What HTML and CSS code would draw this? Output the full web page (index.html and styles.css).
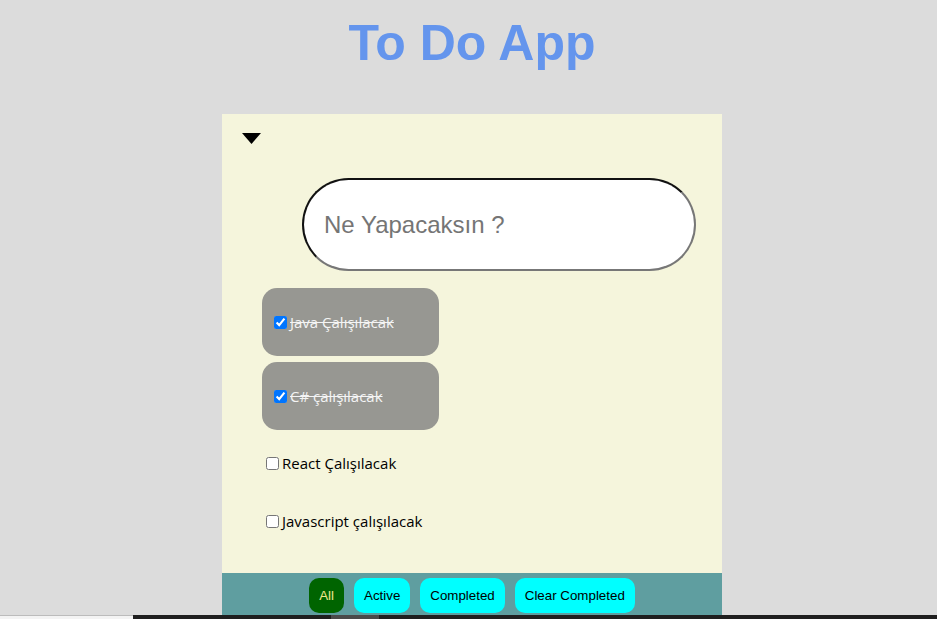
FILE: index.html
```html
<!DOCTYPE html>
<html lang="tr">
<head>
<meta charset="utf-8">
<title>To Do App</title>
<link rel="stylesheet" href="styles.css">
</head>
<body>
<h1 class="title">To Do App</h1>
<section class="card">
  <header class="card-head">
    <label class="toggle-all" aria-label="Toggle all">
      <svg width="19" height="11" viewBox="0 0 19 11"><polygon points="0,0 19,0 9.5,11" fill="#000"/></svg>
    </label>
    <input class="new-todo" type="text" placeholder="Ne Yapacaksın ?">
  </header>
  <ul class="todo-list">
    <li class="todo done"><input type="checkbox" checked><span class="todo-text">Java Çalışılacak</span></li>
    <li class="todo done"><input type="checkbox" checked><span class="todo-text">C# çalışılacak</span></li>
    <li class="todo"><input type="checkbox"><span class="todo-text">React Çalışılacak</span></li>
    <li class="todo"><input type="checkbox"><span class="todo-text">Javascript çalışılacak</span></li>
  </ul>
  <footer class="card-foot">
    <button class="filter filter-on">All</button>
    <button class="filter">Active</button>
    <button class="filter">Completed</button>
    <button class="filter">Clear Completed</button>
  </footer>
</section>
<div class="taskbar">
  <div class="taskbar-left"></div>
  <div class="taskbar-right"><span class="taskbar-item"></span></div>
</div>
</body>
</html>
```
FILE: styles.css
```css
html, body {
  background: #dcdcdc;
}
body {
  margin: 0;
  padding: 0 0 0 7px;
  font-family: "Liberation Sans", Arial, sans-serif;
}
.title {
  margin: 15px 0 0;
  text-align: center;
  font-family: "Liberation Sans", Arial, sans-serif;
  font-weight: bold;
  font-size: 50px;
  color: #6495ed;
  line-height: 56px;
}
.card {
  width: 500px;
  margin: 43px auto 0;
  background: #f5f5dc;
}
.card-head {
  padding: 19px 0 0 20px;
}
.toggle-all {
  display: block;
  width: 19px;
  height: 11px;
}
.toggle-all svg {
  display: block;
}
.new-todo {
  display: block;
  box-sizing: border-box;
  width: 394px;
  height: 93px;
  margin: 34px 0 0 60px;
  padding: 0 20px;
  border: 2px solid;
  border-color: #111 #777 #777 #111;
  border-radius: 47px;
  background: #fff;
  font-family: "Liberation Sans", Arial, sans-serif;
  font-size: 24px;
  outline: none;
}
.new-todo::placeholder {
  color: #757575;
}
.todo-list {
  list-style: none;
  margin: 17px 0 0;
  padding: 0 0 26px 40px;
}
.todo {
  display: flex;
  align-items: center;
  height: 52px;
  margin-bottom: 6px;
  font-family: "Open Sans", "Noto Sans", sans-serif;
  font-size: 15px;
  color: #000;
}
.todo:nth-child(3) {
  margin-top: 7px;
}
.todo:last-child {
  margin-bottom: 0;
}
.todo input {
  margin: 0 3px 0 4px;
  width: 13px;
  height: 13px;
}
.todo.done {
  box-sizing: border-box;
  width: 177px;
  height: 68px;
  padding-left: 8px;
  border-radius: 15px;
  background: #979792;
  color: #f4f4f4;
}
.todo.done .todo-text {
  text-decoration: line-through;
}
.card-foot {
  display: flex;
  justify-content: center;
  gap: 10px;
  padding: 5px 0 10px;
  background: #5f9ea0;
}
.filter {
  border: none;
  border-radius: 10px;
  padding: 10px;
  background: #00ffff;
  color: #000;
  font-family: "Liberation Sans", Arial, sans-serif;
  font-size: 13.333px;
  line-height: 15px;
}
.filter-on {
  background: #006400;
  color: #f0e68c;
}
.taskbar {
  position: fixed;
  left: 0;
  right: 0;
  bottom: 0;
  height: 4px;
  display: flex;
}
.taskbar-left {
  width: 133px;
  background: #f3f3f3;
  border-top: 1px solid #bbb;
  box-sizing: border-box;
}
.taskbar-right {
  flex: 1;
  background: #1f1f1f;
  padding-left: 198px;
}
.taskbar-item {
  display: block;
  width: 48px;
  height: 4px;
  background: #4a4a4a;
}
```
